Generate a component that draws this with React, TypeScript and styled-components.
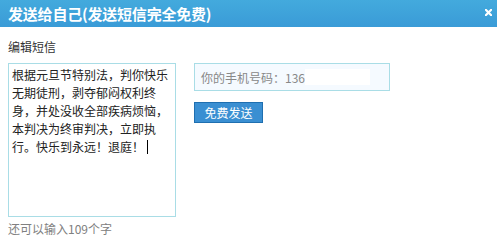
import styled, { createGlobalStyle } from "styled-components";

const GlobalStyle = createGlobalStyle`
  html, body {
    margin: 0;
    padding: 0;
    background: #fff;
  }
  body {
    font-family: "Noto Sans CJK SC", "Liberation Sans", sans-serif;
  }
`;

const Dialog = styled.div`
  width: 497px;
  height: 243px;
  background: #fff;
  overflow: hidden;
`;

const Header = styled.div`
  height: 27px;
  display: flex;
  align-items: center;
  justify-content: space-between;
  padding: 0 5px 0 8px;
  background: linear-gradient(to bottom, #43aadd, #3a9bd7);
`;

const Title = styled.h1`
  margin: 0;
  font-size: 15px;
  font-weight: bold;
  color: #fff;
  line-height: 27px;
  letter-spacing: -0.2px;
`;

const CloseButton = styled.button`
  border: 0;
  background: none;
  padding: 0;
  width: 7px;
  height: 7px;
  margin-top: -3px;
  display: flex;
  cursor: pointer;
`;

const Body = styled.div`
  display: flex;
  padding: 12px 8px 0 8px;
`;

const LeftColumn = styled.div`
  display: flex;
  flex-direction: column;
`;

const Label = styled.div`
  font-size: 12px;
  line-height: 16px;
  color: #333;
  margin-bottom: 8px;
`;

const Editor = styled.div`
  box-sizing: border-box;
  width: 168px;
  height: 154px;
  border: 1px solid #a9dde6;
  padding: 2px 3px;
  font-size: 12px;
  line-height: 18px;
  color: #222;
  word-break: break-all;
`;

const Caret = styled.span`
  display: inline-block;
  width: 1px;
  height: 14px;
  background: #000;
  margin-left: 3px;
  vertical-align: -2px;
`;

const Counter = styled.div`
  font-size: 12px;
  line-height: 16px;
  color: #808080;
  margin-top: 4px;
`;

const RightColumn = styled.div`
  display: flex;
  flex-direction: column;
  align-items: flex-start;
  margin-left: 18px;
  padding-top: 24px;
`;

const PhoneField = styled.div`
  box-sizing: border-box;
  width: 196px;
  height: 28px;
  border: 1px solid #a9dde6;
  background: #f5faff;
  padding: 0 6px;
  display: flex;
  align-items: center;
  font-size: 12px;
  color: #888;
`;

const Masked = styled.span`
  display: inline-block;
  width: 65px;
  height: 16px;
  background: #fff;
`;

const SendButton = styled.button`
  margin-top: 11px;
  box-sizing: border-box;
  width: 69px;
  height: 21px;
  border: 1px solid #1f6fb0;
  background: #3a8fd2;
  color: #fff;
  font-family: inherit;
  font-size: 12px;
  line-height: 18px;
  padding: 0;
  cursor: pointer;
`;

export default function App() {
  return (
    <>
      <GlobalStyle />
      <Dialog>
        <Header>
          <Title>发送给自己(发送短信完全免费)</Title>
          <CloseButton aria-label="关闭">
            <svg width="7" height="7" viewBox="0 0 7 7">
              <path
                d="M0.8 0.8 L6.2 6.2 M6.2 0.8 L0.8 6.2"
                stroke="#fff"
                strokeWidth="2.2"
                strokeLinecap="square"
              />
            </svg>
          </CloseButton>
        </Header>
        <Body>
          <LeftColumn>
            <Label>编辑短信</Label>
            <Editor>
              根据元旦节特别法，判你快乐无期徒刑，剥夺郁闷权利终身，并处没收全部疾病烦恼，本判决为终审判决，立即执行。快乐到永远！退庭！
              <Caret />
            </Editor>
            <Counter>还可以输入109个字</Counter>
          </LeftColumn>
          <RightColumn>
            <PhoneField>
              你的手机号码：136
              <Masked />
            </PhoneField>
            <SendButton>免费发送</SendButton>
          </RightColumn>
        </Body>
      </Dialog>
    </>
  );
}
